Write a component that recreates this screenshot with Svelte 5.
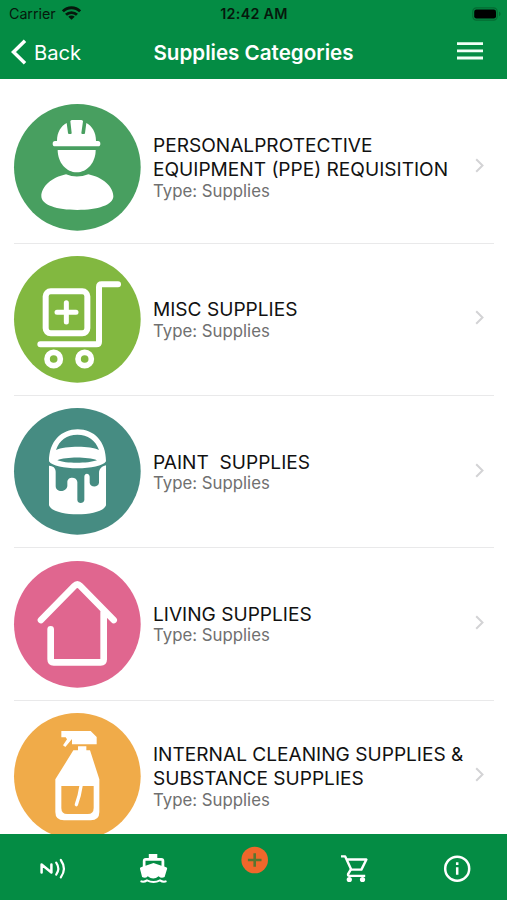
<script>
  const items = [
    { lines: ['PERSONALPROTECTIVE', 'EQUIPMENT (PPE) REQUISITION'], icon: 'worker', color: '#489f60', cy: 217 },
    { lines: ['MISC SUPPLIES'], icon: 'trolley', color: '#82b840', cy: 223 },
    { lines: ['PAINT  SUPPLIES'], icon: 'paint', color: '#468c82', cy: 224 },
    { lines: ['LIVING SUPPLIES'], icon: 'house', color: '#e0668f', cy: 221 },
    { lines: ['INTERNAL CLEANING SUPPLIES &', 'SUBSTANCE SUPPLIES'], icon: 'spray', color: '#f0ab49', cy: 229 }
  ];
</script>

<div class="screen">
  <header>
    <div class="status">
      <div class="carrier">
        <span>Carrier</span>
        <svg width="19" height="14" viewBox="0 0 19 14">
          <g fill="none" stroke="#06180c" stroke-width="2.8">
            <path d="M.9 5.3a12.2 12.2 0 0 1 17.2 0" />
            <path d="M4 8.8a7.8 7.8 0 0 1 11 0" />
          </g>
          <path d="M9.5 13.7 6.3 10.8a4.6 4.6 0 0 1 6.4 0z" fill="#06180c" />
        </svg>
      </div>
      <span class="time">12:42 AM</span>
      <svg class="battery" width="30" height="14" viewBox="0 0 30 14">
        <rect x=".8" y=".8" width="24.4" height="12.4" rx="3.6" fill="none" stroke="#046b32" stroke-width="1.2" />
        <rect x="2.2" y="2.5" width="21.8" height="9" rx="2.2" fill="#000" />
        <path d="M27 4.8c2 .6 2 3.8 0 4.4z" fill="#046b32" />
      </svg>
    </div>
    <nav>
      <div class="back">
        <svg width="16" height="26" viewBox="0 0 16 26"><path d="M14 1.8 2.5 13 14 24.2" fill="none" stroke="#fff" stroke-width="3.5" /></svg>
        <span>Back</span>
      </div>
      <h1>Supplies Categories</h1>
      <svg class="menu" width="26" height="18" viewBox="0 0 26 18"><path d="M0 1.6h26M0 8.8h26M0 16h26" stroke="#f1fff6" stroke-width="2.8" /></svg>
    </nav>
  </header>

  <main>
    {#each items as item}
      <article>
        <svg class="pic" viewBox={`41 ${item.cy - 190} 380 380`}>
          <circle cx="231" cy={item.cy} r="190" fill={item.color} />
          {#if item.icon === 'worker'}
            <g fill="#fff">
              <path d="M210 79q1-4 6-4h26q5 0 6 4l-5 35q0 3 3 3h5q3 0 3-3l4-30c17 9 29 27 29 54h6q7 0 7 8t-7 8H164q-7 0-7-8t7-8h6c0-27 12-45 29-54l4 30q0 3 3 3h5q3 0 3-3z" />
              <path d="M172 165h114c0 38-26 67-57 67s-57-29-57-67z" />
              <path d="M197 238q32 13 67 0c43 9 75 37 75 66 0 26-47 41-108 41s-108-15-108-41c0-29 31-57 74-66z" />
            </g>
          {:else if item.icon === 'trolley'}
            <g fill="none" stroke="#fff" stroke-width="18" stroke-linecap="round" stroke-linejoin="round">
              <rect x="136" y="139" width="125" height="126" rx="15" />
              <path d="M198 173v58M170 202h57" stroke-width="15" />
              <path d="M120 298h168q8 0 8-8V126q0-8 8-8h49" />
              <circle cx="160" cy="342" r="20" stroke-width="17" />
              <circle cx="253" cy="342" r="20" stroke-width="17" />
            </g>
          {:else if item.icon === 'paint'}
            <path fill="#fff" fill-rule="evenodd" d="M146 194c0-60 37-96 86-96s85 36 85 96c-16 28-155 28-171 0zM167 160c26-12 101-14 129 0-10-29-34-46-65-46s-55 17-64 46zM171 191c26-11 91-11 119 0-28 10-94 10-119 0z" />
            <path fill="#fff" d="M146 207c12 1 20 6 20 18v43c0 20 32 20 35 0v-12c0-17 29-17 30 0v54c0 12 20 12 21 0v-70c0-12 15-12 16 0v18c0 14 26 16 28 0v-28c0-14 8-21 21-24v120c-12 36-159 36-171 0z" />
          {:else if item.icon === 'house'}
            <path d="M122 208 222 106q9-9 18 0l100 102M310 185v141q0 9-9 9H160q-9 0-9-9v-90" fill="none" stroke="#fff" stroke-width="20" stroke-linecap="round" />
          {:else}
            <path fill="#fff" d="M183 93h88l18 18v22h-74v-16l-20 24-7-5 12-18-4-6h-13zM233 139h25v12h11l28 87v98q0 25-26 25h-80q-26 0-26-25v-98l54-87h14z" />
            <path fill={item.color} d="M183 258h97v66q0 18-18 18h-61q-18 0-18-18z" />
            <path d="M242 258q-4 29-14 56" fill="none" stroke="#fff" stroke-width="10" stroke-linecap="round" />
          {/if}
        </svg>
        <div class="body">
          <div class="copy">
            {#each item.lines as line}<h2>{line}</h2>{/each}
            <p>Type: Supplies</p>
          </div>
          <svg class="chev" width="9" height="15" viewBox="0 0 9 15"><path d="M1.2 1.2 7.5 7.5 1.2 13.8" fill="none" stroke="#d3d3d5" stroke-width="2" /></svg>
        </div>
      </article>
    {/each}
  </main>

  <footer>
    <svg width="102" height="66" viewBox="0 0 102 66">
      <g fill="none" stroke="#fff" stroke-width="2.2" stroke-linecap="round">
        <path d="M41.6 38.5v-8L51.4 38.5v-8" stroke-linejoin="round" stroke-width="2.5" />
        <path d="M56.2 28.6q4.2 6 0 12M60.8 26q6.2 8.8 0 17.4" />
      </g>
    </svg>
    <svg width="102" height="66" viewBox="102 0 102 66">
      <path fill="#fff" fill-rule="evenodd" d="M148.8 20h8.5v4h4q3 0 3 3v5.6l2.3.9q.8.4.5 1.3L164.6 43q-3.3 1.8-6-.8-5.3 4.8-10.8 0-2.4 2.6-5.7.8L140 34.8q-.3-.9.5-1.3l2.3-.9V27q0-3 3-3h3zM145.5 26.7v5l8-2.7 8 2.7v-5z" />
      <path d="M140.5 47.2q3.3 1.4 6.5-.8 6.5 3.4 13 0 3.2 2.2 6.5.8" fill="none" stroke="#fff" stroke-width="2" />
    </svg>
    <svg width="102" height="66" viewBox="204 0 102 66">
      <circle cx="254.7" cy="26" r="13.3" fill="#f0672b" />
      <path d="M254.7 19.2v13.6M247.9 26h13.6" stroke="#59752f" stroke-width="2.6" />
    </svg>
    <svg width="102" height="66" viewBox="306 0 102 66">
      <g fill="none" stroke="#fff" stroke-width="2.4">
        <path d="M341 22.4h4.2l6 13.2h10.2L366.4 25.5H347" stroke-linejoin="round" />
        <path d="m350.9 35.4-2.8 4.7q-.5 1.8 1.2 1.8h15.9" />
      </g>
      <circle cx="349.3" cy="45.5" r="2.6" fill="#fff" />
      <circle cx="362.5" cy="45.5" r="2.6" fill="#fff" />
    </svg>
    <svg width="99" height="66" viewBox="408 0 99 66">
      <circle cx="457.2" cy="34.7" r="12" fill="none" stroke="#fff" stroke-width="2.5" />
      <path d="M457.2 33.2v7.6M457.2 28.2v2.7" stroke="#fff" stroke-width="2.5" />
    </svg>
  </footer>
</div>

<style>
  :global(body) { margin: 0; background: #fff; }
  .screen { width: 507px; height: 900px; display: flex; flex-direction: column; overflow: hidden; background: #fff; font-family: Inter, 'Liberation Sans', sans-serif; }
  header { flex: none; height: 79px; background: #048c44; }
  .status { height: 27px; display: grid; grid-template-columns: 1fr auto 1fr; align-items: center; padding: 0 5px 0 9px; font-size: 14.3px; color: #06180c; }
  .carrier { display: flex; align-items: center; gap: 6px; letter-spacing: -0.05px; }
  .carrier svg { margin-top: -2px; }
  .time { font-weight: 600; letter-spacing: 0.3px; margin-left: -3px; }
  .battery { justify-self: end; }
  nav { height: 50px; display: grid; grid-template-columns: 1fr auto 1fr; align-items: center; padding: 0 24.5px 0 10.5px; color: #fff; }
  .back { display: flex; align-items: center; gap: 7.5px; font-size: 20.2px; }
  h1 { margin: 0 0 0 14px; font-size: 20.6px; font-weight: 600; white-space: nowrap; }
  .menu { justify-self: end; margin-top: -2px; }
  main { flex: 1; min-height: 0; padding-top: 12.4px; overflow: hidden; }
  article { height: 151.3px; margin: 0 12.7px 0 13.5px; display: flex; align-items: center; border-bottom: 1px solid #e9e9ea; }
  .pic { width: 126.7px; height: 126.7px; flex: none; overflow: visible; }
  .body { flex: 1; min-width: 0; display: flex; align-items: center; justify-content: space-between; padding: 0 10.5px 0 12.8px; }
  .copy { min-width: 0; }
  h2 { margin: 0; font-size: 19.1px; font-weight: 400; line-height: 24.3px; white-space: pre; color: #111; }
  p { margin: 0; font-size: 16.8px; line-height: 19.6px; color: #707070; }
  .chev { flex: none; margin-top: -3px; }
  footer { flex: none; height: 66px; display: flex; background: #048c44; }
</style>
